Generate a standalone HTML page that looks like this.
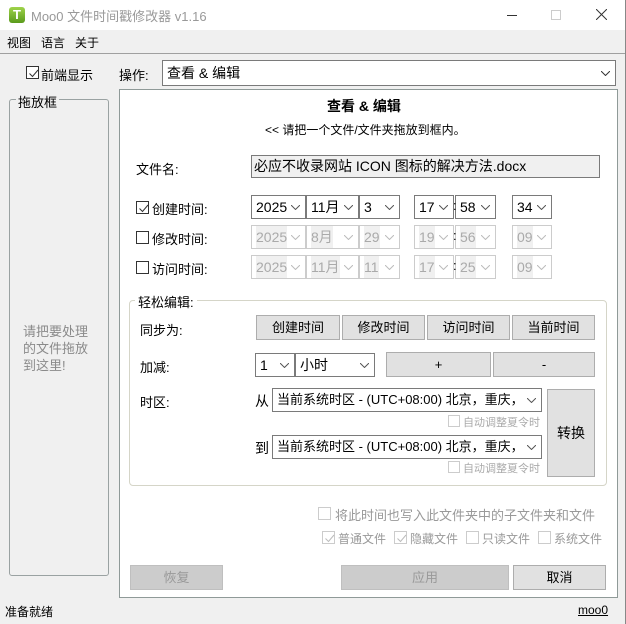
<!DOCTYPE html>
<html><head><meta charset="utf-8"><style>
*{box-sizing:border-box;margin:0;padding:0}
body{width:626px;height:624px;background:#f0f0f0;font-family:"Liberation Sans","Noto Sans CJK SC",sans-serif;font-size:12px;color:#000;position:relative;overflow:hidden}
.a{position:absolute;white-space:nowrap}
.cb{position:absolute;width:13px;height:13px;border:1px solid #333;background:#fff}
.cb.d{border-color:#ccc}
.cb svg{position:absolute;left:1px;top:1px}
.combo{position:absolute;border:1px solid #7a7a7a;background:#fff;font-size:14px;line-height:22px;padding-left:4px;overflow:hidden}
.combo.d{border-color:#ccc;color:#aaa}
.combo .t{display:inline-block}
.combo.d .t{background:#f0f0f0}
.combo .ar{position:absolute;right:5px;top:9px}
.btn{position:absolute;background:#e1e1e1;border:1px solid #adadad;text-align:center;font-size:13px}
.btn.d{background:#ccc;border-color:#bfbfbf;color:#999}
.g{color:#999}
</style></head><body>
<div class="a" style="left:0;top:0;width:626px;height:30px;background:#fff"></div>
<div class="a" style="left:9px;top:7px;width:16px;height:16px;border-radius:3px;background:linear-gradient(#9fd34a,#5a9a1c);color:#fff;font-weight:bold;font-size:13px;line-height:16px;text-align:center">T</div>
<div class="a" style="left:31px;top:6px;font-size:13px;color:#999">Moo0 文件时间戳修改器 v1.16</div>
<div class="a" style="left:507px;top:15px;width:10px;height:1px;background:#333"></div>
<div class="a" style="left:551px;top:10px;width:10px;height:10px;border:1px solid #ccc"></div>
<svg class="a" style="left:596px;top:9px" width="11" height="11"><path d="M0 0L11 11M11 0L0 11" stroke="#333" stroke-width="1"/></svg>
<div class="a" style="left:625px;top:0;width:1px;height:624px;background:#888"></div>
<div class="a" style="left:7px;top:34px">视图</div>
<div class="a" style="left:41px;top:34px">语言</div>
<div class="a" style="left:75px;top:34px">关于</div>
<div class="a" style="left:0;top:53px;width:625px;height:1px;background:#a0a0a0"></div>

<div class="cb" style="left:26px;top:66px"><svg width="11" height="11"><path d="M1.5 5.5L4.5 8.5L10 2" stroke="#333" fill="none"/></svg></div>
<div class="a" style="left:41px;top:65px;font-size:13px">前端显示</div>
<div class="a" style="left:119px;top:65px;font-size:13px">操作:</div>
<div class="combo" style="left:162px;top:60px;width:454px;height:26px;line-height:24px;font-size:14px">查看 &amp; 编辑<svg class="ar" style="top:10px" width="9" height="5"><path d="M0 0L4.5 4.5L9 0" stroke="#333" fill="none"/></svg></div>

<div class="a" style="left:9px;top:99px;width:100px;height:477px;border:1px solid #9aa2a2;border-radius:3px"></div>
<div class="a" style="left:16px;top:92px;font-size:13px;background:#f0f0f0;padding:0 2px">拖放框</div>
<div class="a g" style="left:23px;top:323px;font-size:13px;line-height:17px;color:#8a8a8a">请把要处理<br>的文件拖放<br>到这里!</div>

<div class="a" style="left:119px;top:89px;width:499px;height:509px;border:1px solid #8f9a98;background:#fff"></div>
<div class="a" style="left:327px;top:96px;font-size:14px;font-weight:bold">查看 &amp; 编辑</div>
<div class="a" style="left:265px;top:121px;font-size:12px">&lt;&lt; 请把一个文件/文件夹拖放到框内。</div>
<div class="a" style="left:136px;top:159px;font-size:13px">文件名:</div>
<div class="a" style="left:251px;top:155px;width:349px;height:23px;border:1px solid #7a7a7a;background:#f0f0f0;font-size:14px;line-height:21px;padding-left:2px">必应不收录网站 ICON 图标的解决方法.docx</div>

<div class="cb" style="left:136px;top:201px"><svg width="11" height="11"><path d="M1.5 5.5L4.5 8.5L10 2" stroke="#333" fill="none"/></svg></div>
<div class="a" style="left:152px;top:199px;font-size:13px">创建时间:</div>
<div class="cb" style="left:136px;top:231px"></div>
<div class="a" style="left:152px;top:229px;font-size:13px">修改时间:</div>
<div class="cb" style="left:136px;top:261px"></div>
<div class="a" style="left:152px;top:259px;font-size:13px">访问时间:</div>

<div id="rows"></div>

<div class="a" style="left:129px;top:300px;width:478px;height:186px;border:1px solid #d5d5c8;border-radius:4px"></div>
<div class="a" style="left:135px;top:292px;font-size:13px;background:#fff;padding:0 3px">轻松编辑:</div>
<div class="a" style="left:140px;top:320px;font-size:13px">同步为:</div>
<div class="btn" style="left:256px;top:315px;width:84px;height:25px;line-height:23px">创建时间</div>
<div class="btn" style="left:342px;top:315px;width:83px;height:25px;line-height:23px">修改时间</div>
<div class="btn" style="left:427px;top:315px;width:83px;height:25px;line-height:23px">访问时间</div>
<div class="btn" style="left:512px;top:315px;width:83px;height:25px;line-height:23px">当前时间</div>
<div class="a" style="left:140px;top:357px;font-size:13px">加减:</div>
<div class="combo" style="left:255px;top:353px;width:40px;height:24px">1<svg class="ar" width="9" height="5"><path d="M0 0L4.5 4.5L9 0" stroke="#555" fill="none"/></svg></div>
<div class="combo" style="left:295px;top:353px;width:80px;height:24px">小时<svg class="ar" width="9" height="5"><path d="M0 0L4.5 4.5L9 0" stroke="#555" fill="none"/></svg></div>
<div class="btn" style="left:386px;top:352px;width:105px;height:25px;line-height:23px">+</div>
<div class="btn" style="left:493px;top:352px;width:102px;height:25px;line-height:23px">-</div>

<div class="a" style="left:140px;top:392px;font-size:13px">时区:</div>
<div class="a" style="left:255px;top:391px;font-size:14px">从</div>
<div class="combo" style="left:272px;top:388px;width:270px;height:24px;font-size:13px;padding-left:4px">当前系统时区 - (UTC+08:00) 北京，重庆，<svg class="ar" width="9" height="5"><path d="M0 0L4.5 4.5L9 0" stroke="#555" fill="none"/></svg></div>
<div class="cb d" style="left:448px;top:415px;width:12px;height:12px"></div>
<div class="a" style="left:463px;top:414px;font-size:11px;color:#aaa">自动调整夏令时</div>
<div class="a" style="left:255px;top:438px;font-size:14px">到</div>
<div class="combo" style="left:272px;top:435px;width:270px;height:24px;font-size:13px;padding-left:4px">当前系统时区 - (UTC+08:00) 北京，重庆，<svg class="ar" width="9" height="5"><path d="M0 0L4.5 4.5L9 0" stroke="#555" fill="none"/></svg></div>
<div class="cb d" style="left:448px;top:461px;width:12px;height:12px"></div>
<div class="a" style="left:463px;top:460px;font-size:11px;color:#aaa">自动调整夏令时</div>
<div class="btn" style="left:547px;top:389px;width:48px;height:88px;line-height:86px;font-size:14px">转换</div>

<div class="cb d" style="left:318px;top:507px"></div>
<div class="a" style="left:335px;top:505px;font-size:13px;color:#999">将此时间也写入此文件夹中的子文件夹和文件</div>
<div class="cb d" style="left:322px;top:531px"><svg width="11" height="11"><path d="M1.5 5.5L4.5 8.5L10 2" stroke="#bbb" fill="none"/></svg></div>
<div class="a" style="left:338px;top:530px;color:#999">普通文件</div>
<div class="cb d" style="left:394px;top:531px"><svg width="11" height="11"><path d="M1.5 5.5L4.5 8.5L10 2" stroke="#bbb" fill="none"/></svg></div>
<div class="a" style="left:410px;top:530px;color:#999">隐藏文件</div>
<div class="cb d" style="left:466px;top:531px"></div>
<div class="a" style="left:482px;top:530px;color:#999">只读文件</div>
<div class="cb d" style="left:538px;top:531px"></div>
<div class="a" style="left:554px;top:530px;color:#999">系统文件</div>

<div class="btn d" style="left:130px;top:565px;width:93px;height:25px;line-height:23px">恢复</div>
<div class="btn d" style="left:341px;top:565px;width:168px;height:25px;line-height:23px">应用</div>
<div class="btn" style="left:513px;top:565px;width:93px;height:25px;line-height:23px">取消</div>

<div class="a" style="left:5px;top:603px">准备就绪</div>
<div class="a" style="left:578px;top:603px;text-decoration:underline">moo0</div>

<script>
var arr='<svg class="ar" width="9" height="5"><path d="M0 0L4.5 4.5L9 0" stroke="#555" fill="none"/></svg>';
var arrd='<svg class="ar" width="9" height="5"><path d="M0 0L4.5 4.5L9 0" stroke="#bbb" fill="none"/></svg>';
var cols=[[251,55],[306,53],[359,41],[414,40],[455,41],[512,40]];
var rows=[[195,['2025','11月','3','17','58','34'],0],[225,['2025','8月','29','19','56','09'],1],[255,['2025','11月','11','17','25','09'],1]];
var h='';
rows.forEach(function(r){
 cols.forEach(function(c,i){
  h+='<div class="combo'+(r[2]?' d':'')+'" style="left:'+c[0]+'px;top:'+r[0]+'px;width:'+c[1]+'px;height:24px"><span class="t">'+r[1][i]+'</span>'+(r[2]?arrd:arr)+'</div>';
 });
 h+='<div class="a" style="left:453px;top:'+(r[0]+3)+'px;font-size:13px">:</div>';
});
document.getElementById('rows').outerHTML=h;
</script>
</body></html>
